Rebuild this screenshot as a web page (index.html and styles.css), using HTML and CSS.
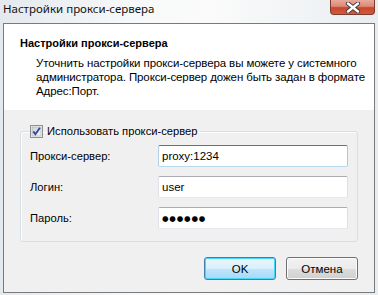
FILE: index.html
```html
<!DOCTYPE html>
<html lang="ru">
<head>
<meta charset="utf-8">
<link rel="stylesheet" href="styles.css">
</head>
<body>
<div class="window">
  <div class="titlebar">
    <span class="title">Настройки прокси-сервера</span>
    <div class="close">
      <svg width="16" height="11" viewBox="0 0 16 11">
        <path d="M3 1.5 L13 9.5 M13 1.5 L3 9.5" stroke="#3b3b3b" stroke-width="4.2" stroke-linecap="round"/>
        <path d="M3 1.5 L13 9.5 M13 1.5 L3 9.5" stroke="#ffffff" stroke-width="2.4" stroke-linecap="round"/>
      </svg>
    </div>
  </div>
  <div class="client">
    <div class="header">
      <div class="h-title">Настройки прокси-сервера</div>
      <div class="h-desc">Уточнить настройки прокси-сервера вы можете у системного<br>администратора. Прокси-сервер дожен быть задан в формате<br>Адрес:Порт.</div>
    </div>
    <div class="body">
      <fieldset class="group">
        <legend class="legend">
          <svg class="chk" width="13" height="13" viewBox="0 0 13 13">
            <defs>
              <linearGradient id="cg" x1="0" y1="0" x2="1" y2="1">
                <stop offset="0" stop-color="#cbcfd5"/>
                <stop offset="1" stop-color="#f6f6f6"/>
              </linearGradient>
            </defs>
            <rect x="0.5" y="0.5" width="12" height="12" fill="#f4f4f4" stroke="#8e8f8f"/>
            <rect x="2" y="2" width="9" height="9" fill="url(#cg)" stroke="#a9acb1" stroke-width="0.6"/>
            <path d="M3.3 6.4 L5.4 9.2 L9.9 2.8" fill="none" stroke="#2c4795" stroke-width="1.8"/>
          </svg>
          <span>Использовать прокси-сервер</span>
        </legend>
        <div class="form">
          <label class="lbl">Прокси-сервер:</label>
          <div class="field focused">proxy:1234</div>
          <label class="lbl">Логин:</label>
          <div class="field">user</div>
          <label class="lbl">Пароль:</label>
          <div class="field"><span class="dots">●●●●●●</span></div>
        </div>
      </fieldset>
      <div class="buttons">
        <div class="btn default">OK</div>
        <div class="btn">Отмена</div>
      </div>
    </div>
  </div>
</div>
</body>
</html>
```
FILE: styles.css
```css
html, body {
  margin: 0;
  padding: 0;
}
body {
  width: 378px;
  height: 295px;
  overflow: hidden;
  font-family: "Liberation Sans", Arial, sans-serif;
  font-size: 11.2px;
  color: #000;
}
.window {
  width: 378px;
  height: 295px;
  background: linear-gradient(to right, #e4e9ee 0%, #f7f8f9 35%, #fbfbfb 55%, #e9edf0 100%);
  display: flex;
  flex-direction: column;
}
.titlebar {
  height: 23px;
  display: flex;
  align-items: flex-start;
  justify-content: space-between;
}
.title {
  font-family: "Noto Sans", "Open Sans", sans-serif;
  font-size: 11.5px;
  line-height: 14px;
  padding: 2px 0 0 3px;
  color: #111;
}
.close {
  width: 45px;
  height: 15px;
  margin-right: 3px;
  box-sizing: border-box;
  border: 1px solid #7e3a2d;
  border-top: none;
  border-radius: 0 0 4px 4px;
  background: linear-gradient(to bottom, #e9a99b 0%, #dc8a78 45%, #c8462d 55%, #d25a3c 100%);
  display: flex;
  align-items: center;
  justify-content: center;
}
.close svg {
  display: block;
}
.client {
  margin: 0 3px 2px 3px;
  flex: 1;
  border: 1px solid #7a7a7a;
  background: #f0f0f0;
  display: flex;
  flex-direction: column;
}
.header {
  background: #fff;
  height: 86px;
  box-sizing: border-box;
  padding: 12px 16px 0 16px;
}
.h-title {
  font-weight: bold;
  font-size: 11px;
  line-height: 14px;
}
.h-desc {
  margin-top: 6px;
  padding-left: 16px;
  font-size: 11.5px;
  letter-spacing: -0.1px;
  line-height: 14px;
  white-space: nowrap;
}
.body {
  flex: 1;
  padding: 14px 16px 0 16px;
  display: flex;
  flex-direction: column;
}
.group {
  margin: 0;
  padding: 7px 9px 12px 9px;
  border: 1px solid #d5dfe5;
  border-radius: 3px;
  box-shadow: inset 1px 1px 0 #fff;
  min-width: 0;
}
.legend {
  padding: 0 2px 0 0;
  margin-left: 0;
  display: flex;
  align-items: center;
  gap: 4px;
  line-height: 14px;
}
.chk {
  display: block;
}
.form {
  display: grid;
  grid-template-columns: 128px 190px;
  row-gap: 9px;
  align-items: center;
}
.lbl {
  line-height: 14px;
}
.field {
  height: 22px;
  box-sizing: border-box;
  border: 1px solid;
  border-color: #abadb3 #dbdfe6 #e3e9ef #e2e3ea;
  background: #fff;
  padding: 0 3px;
  line-height: 20px;
  border-radius: 2px;
  font-size: 11.5px;
}
.field.focused {
  border-color: #3d7bad #a4c9e3 #b7d9ed #b5cfe7;
}
.dots {
  font-family: "DejaVu Sans", sans-serif;
  font-size: 7.5px;
  letter-spacing: 0.8px;
  vertical-align: 1px;
}
.buttons {
  margin-top: 15px;
  display: flex;
  justify-content: flex-end;
  gap: 10px;
  padding-right: 0;
}
.btn {
  width: 72px;
  height: 23px;
  box-sizing: border-box;
  border: 1px solid #707070;
  border-radius: 3px;
  background: linear-gradient(to bottom, #f2f2f2 0%, #ebebeb 50%, #dddddd 51%, #cfcfcf 100%);
  box-shadow: inset 0 0 0 1px #fcfcfc;
  display: flex;
  align-items: center;
  justify-content: center;
  line-height: 14px;
  font-size: 11.5px;
}
.btn.default {
  border-color: #3c7fb1;
  background: linear-gradient(to bottom, #eaf6fd 0%, #d9f0fc 50%, #bee6fd 51%, #a7d9f5 100%);
  box-shadow: inset 0 0 0 1px #48d7fb;
}
```
